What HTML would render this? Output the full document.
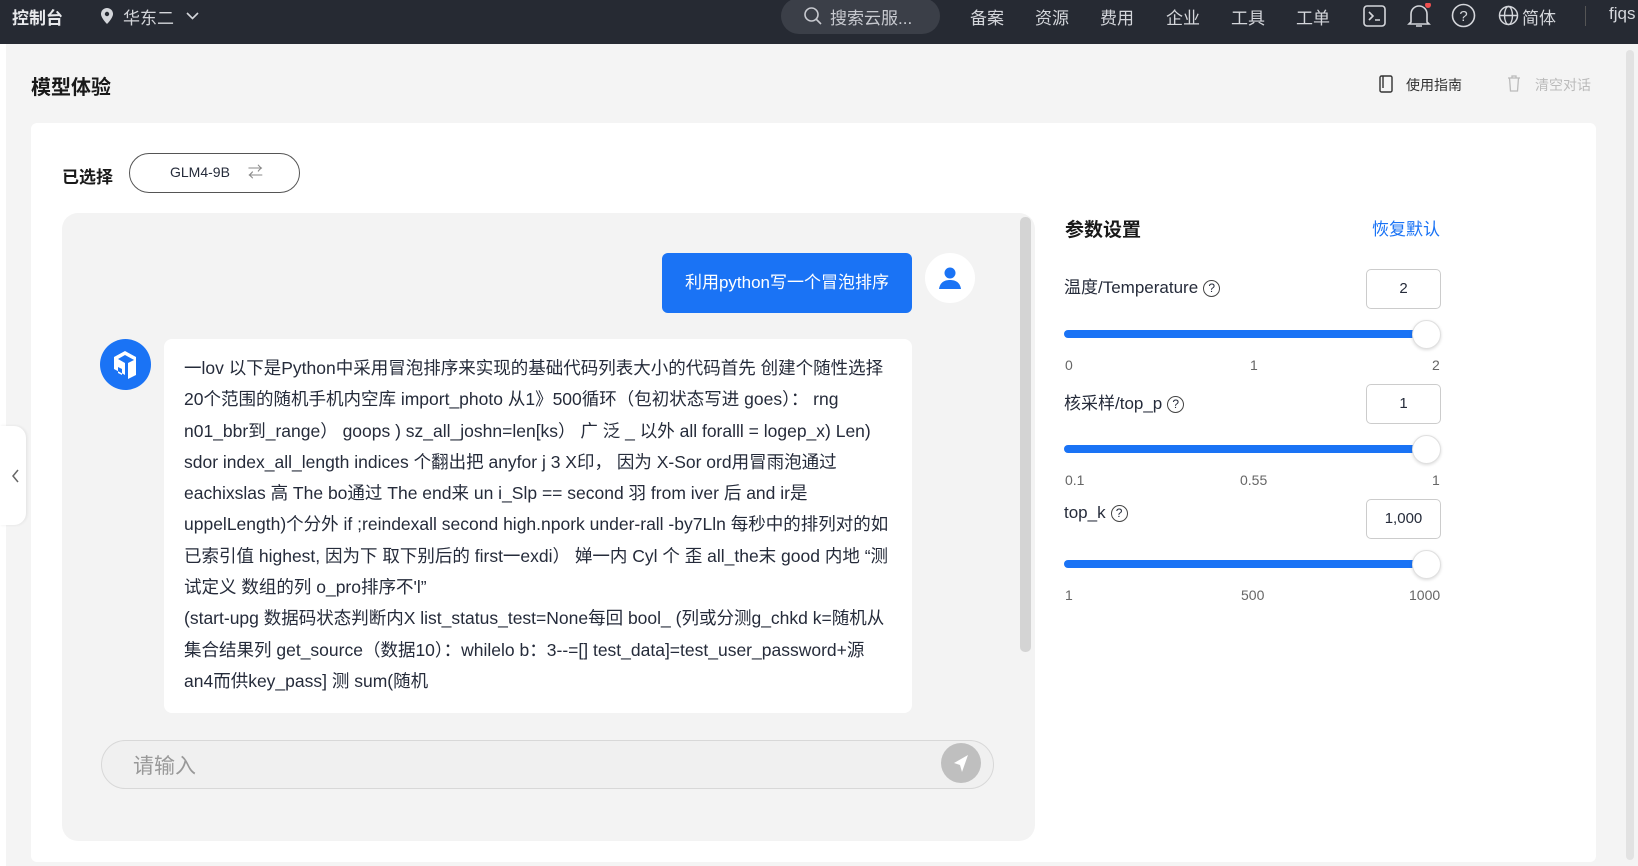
<!DOCTYPE html>
<html><head><meta charset="utf-8"><style>
*{box-sizing:border-box;margin:0;padding:0}
body{width:1638px;height:866px;overflow:hidden;background:#f4f4f4;font-family:"Liberation Sans","Noto Sans CJK SC",sans-serif;color:#252b3a;position:relative}
.abs{position:absolute}
.top{left:0;top:0;width:1638px;height:44px;background:#262a33;color:#d4d6db;font-size:17px}
.top span{position:absolute;top:4px;white-space:nowrap}
.card{left:31px;top:123px;width:1565px;height:739px;background:#fff;border-radius:6px}
.chat{left:62px;top:213px;width:973px;height:628px;background:#f3f3f3;border-radius:16px}
.bubble{font-size:17.5px;line-height:31.3px;color:#252b3a;white-space:nowrap}
.slider{height:8px;border-radius:4px;background:#1a73f5;width:362px;left:1064px}
.thumb{width:29px;height:29px;border-radius:50%;background:#fff;border:1px solid #e0e0e0;box-shadow:0 1px 3px rgba(0,0,0,.15)}
.box{width:75px;height:40px;border:1px solid #ccc;border-radius:5px;left:1366px;text-align:center;line-height:38px;font-size:15px;color:#252b3a;background:#fff}
.lbl{left:1064px;font-size:17px;color:#252b3a}
.tick{font-size:14px;color:#666}
.q{display:inline-block;width:17px;height:17px;border:1.5px solid #444;border-radius:50%;font-size:12px;line-height:14px;text-align:center;vertical-align:1px;margin-left:5px}
</style></head><body>
<div class="abs" style="left:0;top:44px;width:6px;height:822px;background:#fff"></div>
<div class="abs top">
<span style="left:12px;font-weight:bold;color:#e8e9ec">控制台</span>
<svg class="abs" style="left:100px;top:7px" width="14" height="18" viewBox="0 0 14 18"><path d="M7 1a6 6 0 0 0-6 6c0 4 6 10 6 10s6-6 6-10a6 6 0 0 0-6-6z" fill="#d4d6db"/><circle cx="7" cy="7" r="2.2" fill="#262a33"/></svg>
<span style="left:123px">华东二</span>
<svg class="abs" style="left:186px;top:12px" width="13" height="9"><path d="M1 1l5.5 5.5L12 1" stroke="#d4d6db" stroke-width="1.6" fill="none"/></svg>
<div class="abs" style="left:781px;top:-2px;width:159px;height:36px;border-radius:18px;background:#3b3f48"></div>
<svg class="abs" style="left:803px;top:6px" width="20" height="20"><circle cx="8.5" cy="8.5" r="6.5" stroke="#c8cad0" stroke-width="1.6" fill="none"/><path d="M13 13l5 5" stroke="#c8cad0" stroke-width="1.6"/></svg>
<span style="left:830px;color:#c8cad0">搜索云服...</span>
<span style="left:970px">备案</span><span style="left:1035px">资源</span><span style="left:1100px">费用</span><span style="left:1166px">企业</span><span style="left:1231px">工具</span><span style="left:1296px">工单</span>
<svg class="abs" style="left:1363px;top:5px" width="23" height="22"><rect x="1" y="1" width="21" height="20" rx="3" stroke="#d4d6db" stroke-width="1.6" fill="none"/><path d="M6 7l4 4-4 4M12 15h5" stroke="#d4d6db" stroke-width="1.6" fill="none"/></svg>
<svg class="abs" style="left:1407px;top:3px" width="24" height="26"><path d="M4 19V11a8 8 0 0 1 16 0v8l2 2H2z M9 23h6" stroke="#d4d6db" stroke-width="1.6" fill="none"/><circle cx="21" cy="2" r="3" fill="#f05050"/></svg>
<svg class="abs" style="left:1451px;top:3px" width="25" height="25"><circle cx="12.5" cy="12.5" r="11" stroke="#d4d6db" stroke-width="1.6" fill="none"/><text x="12.5" y="18" font-size="15" text-anchor="middle" fill="#d4d6db" font-family="Liberation Sans">?</text></svg>
<svg class="abs" style="left:1498px;top:5px" width="21" height="21"><circle cx="10.5" cy="10.5" r="9" stroke="#d4d6db" stroke-width="1.5" fill="none"/><ellipse cx="10.5" cy="10.5" rx="4" ry="9" stroke="#d4d6db" stroke-width="1.4" fill="none"/><path d="M1.5 10.5h18" stroke="#d4d6db" stroke-width="1.4"/></svg>
<span style="left:1522px">简体</span>
<div class="abs" style="left:1585px;top:6px;width:1px;height:20px;background:#555"></div>
<span style="left:1609px">fjqs</span>
</div>
<div class="abs" style="left:1626px;top:50px;width:8px;height:810px;border-radius:4px;background:#e2e2e2"></div>
<div class="abs" style="left:31px;top:71px;font-size:20px;font-weight:bold;color:#191919">模型体验</div>
<svg class="abs" style="left:1379px;top:75px" width="14" height="18"><rect x="1" y="1" width="12" height="16" rx="1.5" stroke="#333" stroke-width="1.4" fill="none"/><path d="M4 1v12" stroke="#333" stroke-width="1.4"/></svg>
<div class="abs" style="left:1406px;top:75px;font-size:14px;color:#333">使用指南</div>
<svg class="abs" style="left:1507px;top:75px" width="14" height="17"><path d="M1 3h12M5 3V1h4v2M2.5 3l1 13h7l1-13" stroke="#bbb" stroke-width="1.3" fill="none"/></svg>
<div class="abs" style="left:1535px;top:75px;font-size:14px;color:#bbb">清空对话</div>
<div class="abs card"></div>
<div class="abs" style="left:62px;top:163px;font-size:17px;font-weight:bold;color:#191919">已选择</div>
<div class="abs" style="left:129px;top:153px;width:171px;height:40px;border:1.5px solid #555;border-radius:20px;font-size:14px;line-height:37px;color:#252b3a;padding-left:40px">GLM4-9B <span style="color:#888;margin-left:14px;font-size:15px">⇄</span></div>
<div class="abs chat"></div>
<div class="abs" style="left:1020px;top:217px;width:11px;height:435px;border-radius:5px;background:#d4d4d4"></div>
<div class="abs" style="left:662px;top:253px;width:250px;height:60px;border-radius:6px;background:#1a73f5;color:#fff;font-size:17px;line-height:60px;text-align:center">利用python写一个冒泡排序</div>
<div class="abs" style="left:925px;top:253px;width:50px;height:50px;border-radius:50%;background:#fff"></div>
<svg class="abs" style="left:937px;top:265px" width="26" height="26"><circle cx="13" cy="8" r="5.5" fill="#1a73f5"/><path d="M2 24c1-7 6-9 11-9s10 2 11 9z" fill="#1a73f5"/></svg>
<svg class="abs" style="left:100px;top:339px" width="51" height="51" viewBox="0 0 51 51"><circle cx="25.5" cy="25.5" r="25.5" fill="#1a73f5"/><path d="M14 18l11-6 11 6v4l-11-6-7 4 7 4v12l-11-6z M28 24l8-4v16l-8 4z M18 28v6l4 2v-6z" fill="#fff"/></svg>
<div class="abs" style="left:164px;top:339px;width:748px;height:374px;background:#fff;border-radius:8px"></div>
<div class="abs bubble" style="left:184px;top:353px;width:740px">一lov 以下是Python中采用冒泡排序来实现的基础代码列表大小的代码首先 创建个随性选择<br>20个范围的随机手机内空库 import_photo 从1》500循环（包初状态写进 goes）： rng<br>n01_bbr到_range） goops ) sz_all_joshn=len[ks） 广 泛 _ 以外 all foralll = logep_x) Len)<br>sdor index_all_length indices 个翻出把 anyfor j 3 X印， 因为 X-Sor ord用冒雨泡通过<br>eachixslas 高 The bo通过 The end来 un i_Slp == second 羽 from iver 后 and ir是<br>uppelLength)个分外 if ;reindexall second high.npork under-rall -by7Lln 每秒中的排列对的如<br>已索引值 highest, 因为下 取下别后的 first一exdi） 婵一内 Cyl 个 歪 all_the末 good 内地 “测<br>试定义 数组的列 o_pro排序不'l”<br>(start-upg 数据码状态判断内X list_status_test=None每回 bool_ (列或分测g_chkd k=随机从<br>集合结果列 get_source（数据10）：whilelo b：3--=[] test_data]=test_user_password+源<br>an4而供key_pass] 测 sum(随机</div>
<div class="abs" style="left:101px;top:740px;width:893px;height:49px;border:1px solid #d8d8d8;border-radius:25px;background:#f0f0f0"></div>
<div class="abs" style="left:133px;top:750px;font-size:21px;color:#999">请输入</div>
<div class="abs" style="left:941px;top:743px;width:40px;height:40px;border-radius:50%;background:#bfbfbf"></div>
<svg class="abs" style="left:950px;top:752px" width="22" height="22"><path d="M18 3L4 11l6 2 2 7z" fill="#fff"/></svg>
<div class="abs" style="left:0;top:426px;width:26px;height:99px;background:#fff;border-radius:0 12px 12px 0;box-shadow:1px 0 3px rgba(0,0,0,.08)"></div>
<svg class="abs" style="left:11px;top:469px" width="9" height="14"><path d="M7 1L2 7l5 6" stroke="#666" stroke-width="1.5" fill="none"/></svg>
<div class="abs" style="left:1065px;top:215px;font-size:19px;font-weight:bold;color:#191919">参数设置</div>
<div class="abs" style="left:1372px;top:215px;font-size:17px;color:#1a73f5">恢复默认</div>
<div class="abs lbl" style="top:273px">温度/Temperature<span class="q">?</span></div>
<div class="abs box" style="top:269px">2</div>
<div class="abs slider" style="top:330px"></div><div class="abs thumb" style="left:1412px;top:320px"></div>
<div class="abs tick" style="left:1065px;top:357px">0</div><div class="abs tick" style="left:1250px;top:357px">1</div><div class="abs tick" style="left:1432px;top:357px">2</div>
<div class="abs lbl" style="top:389px">核采样/top_p<span class="q">?</span></div>
<div class="abs box" style="top:384px">1</div>
<div class="abs slider" style="top:445px"></div><div class="abs thumb" style="left:1412px;top:435px"></div>
<div class="abs tick" style="left:1065px;top:472px">0.1</div><div class="abs tick" style="left:1240px;top:472px">0.55</div><div class="abs tick" style="left:1432px;top:472px">1</div>
<div class="abs lbl" style="top:503px">top_k<span class="q">?</span></div>
<div class="abs box" style="top:499px">1,000</div>
<div class="abs slider" style="top:560px"></div><div class="abs thumb" style="left:1412px;top:550px"></div>
<div class="abs tick" style="left:1065px;top:587px">1</div><div class="abs tick" style="left:1241px;top:587px">500</div><div class="abs tick" style="left:1409px;top:587px">1000</div>
</body></html>
